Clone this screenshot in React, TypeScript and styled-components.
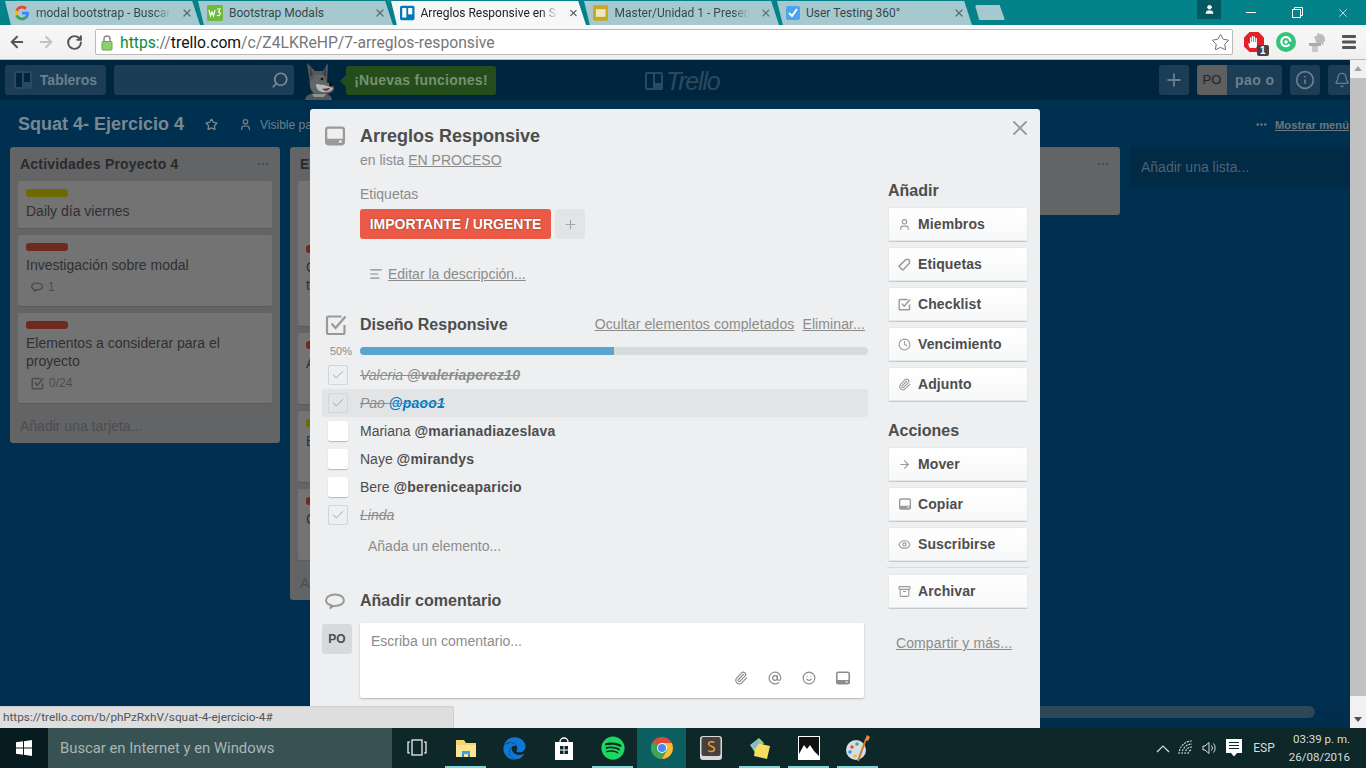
import React from 'react';
import styled, { createGlobalStyle } from 'styled-components';
import {
  AlignLeft, Archive, ArrowLeft, ArrowRight, AtSign, Bell, Check, Clock, Ellipsis, Eye, Info,
  Paperclip, Plus, RotateCw, Search, Smile, Star, User, X,
} from 'lucide-react';
import { FaEdge, FaSpotify } from 'react-icons/fa';

const Global = createGlobalStyle`
  html, body { margin: 0; padding: 0; width: 1366px; height: 768px; overflow: hidden; background: #00304f; }
  * { box-sizing: border-box; }
`;

const Screen = styled.div`
  width: 1366px; height: 768px; position: relative; overflow: hidden;
  display: flex; flex-direction: column;
  font-family: "Liberation Sans", Arial, sans-serif;
`;

/* ---------- browser ---------- */
const TabStrip = styled.div`
  height: 25px; flex: none; background: #03828a; display: flex; align-items: flex-end; padding-left: 5px; position: relative;
`;
const Tab = styled.div<{ $active?: boolean }>`
  width: 195px; height: 24px; margin-right: -2px; flex: none;
  background: ${p => (p.$active ? '#f6f7f7' : '#a6c8cf')};
  clip-path: polygon(0 0, 96% 0, 100% 100%, 3% 100%);
  display: flex; align-items: center; gap: 6px; padding: 0 7px 0 9px;
  font: 12px Roboto, sans-serif; color: ${p => (p.$active ? '#222' : '#37494d')};
`;
const TabTitle = styled.span<{ $fade?: boolean }>`
  flex: 1; white-space: nowrap;
  ${p => (p.$fade ? `
    -webkit-mask-image: linear-gradient(90deg, #000 85%, transparent 97%);
    mask-image: linear-gradient(90deg, #000 85%, transparent 97%);
  ` : '')}
`;
const NewTab = styled.div`
  width: 30px; height: 15px; margin: 0 0 5px 5px; background: #a6c8cf; border-radius: 2px;
  clip-path: polygon(0 0, 82% 0, 100% 100%, 14% 100%);
`;
const Account = styled.div`
  position: absolute; left: 1197px; top: 0; width: 24px; height: 19px; background: #04585f;
  display: flex; align-items: center; justify-content: center; color: #fff;
`;
const WinControls = styled.div`
  margin-left: auto; display: flex; align-self: flex-start; height: 25px; color: #fff;
`;
const WinButton = styled.div`
  width: 46px; height: 25px; display: flex; align-items: center; justify-content: center;
`;
const Toolbar = styled.div`
  height: 35px; flex: none; display: flex; align-items: center; padding: 0 5px 0 8px;
  background: linear-gradient(#f8f8f8, #f0f0f0); color: #555; border-bottom: 1px solid #bbb;
`;
const NavIcons = styled.div`
  display: flex; align-items: center; gap: 11px; width: 87px; flex: none;
`;
const Omnibox = styled.div`
  width: 1138px; height: 26px; flex: none; background: #fff; border: 1px solid #b9b9b9; border-radius: 2px;
  display: flex; align-items: center; padding: 0 2px 0 5px;
  font: 15.7px Roboto, sans-serif; white-space: nowrap;
`;
const UrlScheme = styled.span` color: #0a8a3c; margin-left: 7px; `;
const UrlHost = styled.span` color: #111; `;
const UrlPath = styled.span` color: #777; `;
const UrlStar = styled.span` margin-left: auto; display: flex; color: #666; `;
const Extensions = styled.div`
  display: flex; align-items: center; width: 128px; padding-left: 9px; gap: 8px; flex: none;
`;
const ExtSlot = styled.div` position: relative; display: flex; width: 24px; height: 24px; align-items: center; justify-content: center; `;
const ExtBadge = styled.span`
  position: absolute; right: -3px; bottom: -2px; width: 12px; height: 11px; background: #444; border-radius: 2px;
  color: #fff; font: bold 10px/11px "Liberation Sans", sans-serif; text-align: center;
`;

/* ---------- page ---------- */
const Page = styled.div` flex: 1; display: flex; min-height: 0; position: relative; overflow: hidden; `;
const BoardColumn = styled.div`
  width: 1350px; flex: none; display: flex; flex-direction: column; background: #00304f; overflow: hidden;
`;
const VScroll = styled.div`
  width: 16px; flex: none; background: #f1f1f1; display: flex; flex-direction: column; align-items: center;
`;
const ScrollArrow = styled.div<{ $down?: boolean }>`
  width: 0; height: 0; margin: 6px 0;
  border-left: 4px solid transparent; border-right: 4px solid transparent;
  ${p => (p.$down ? 'border-top: 5px solid #505050;' : 'border-bottom: 5px solid #a3a3a3;')}
`;
const VThumb = styled.div` width: 16px; height: 618px; background: #c1c1c1; margin-top: 1px; `;
const ScrollSpace = styled.div` flex: 1; `;

const AppHeader = styled.div`
  height: 40px; flex: none; background: #00263f; display: flex; align-items: center; padding: 0 0 0 5px; position: relative; color: #6c7f8c;
`;
const HeaderButton = styled.div<{ $w?: number }>`
  height: 30px; width: ${p => (p.$w ? `${p.$w}px` : 'auto')}; background: #1b3e56; border-radius: 3px; flex: none;
  display: flex; align-items: center; justify-content: center; gap: 8px; color: #6c7f8c;
  font: bold 14px "Liberation Sans", sans-serif;
`;
const HeaderSearch = styled(HeaderButton)`
  width: 180px; margin-left: 8px; justify-content: flex-end; padding-right: 5px; color: #7b8e9b;
  svg { transform: scaleX(-1); }
`;
const Taco = styled.div` width: 36px; height: 40px; margin-left: 7px; flex: none; display: flex; `;
const NewsBubble = styled.div`
  position: relative; height: 29px; margin-left: 9px; width: 150px; background: #254d1c; border-radius: 3px; flex: none;
  color: #76916e; font: bold 14px/29px "Liberation Sans", sans-serif; text-align: center; letter-spacing: .25px;
  &::before {
    content: ""; position: absolute; left: -6px; top: 9px; border-right: 6px solid #254d1c;
    border-top: 6px solid transparent; border-bottom: 6px solid transparent;
  }
`;
const HeaderLogo = styled.div`
  position: absolute; left: 645px; top: 9px; display: flex; align-items: center; gap: 3px; color: #2b4a60;
  font: italic 25px/24px "Liberation Sans", sans-serif; letter-spacing: -1.2px;
`;
const LogoMark = styled.span`
  width: 18px; height: 18px; border-radius: 2px; background: #2b4a60; display: flex; gap: 2px; padding: 2px;
`;
const LogoBar = styled.i<{ $h: number }>`
  display: block; width: 6px; height: ${p => p.$h}px; background: #00263f;
`;
const HeaderRight = styled.div`
  margin-left: auto; display: flex; align-items: center; gap: 8px;
`;
const UserChip = styled(HeaderButton)` gap: 0; justify-content: flex-start; overflow: hidden; width: 85px; `;
const UserInitials = styled.span`
  width: 30px; height: 30px; background: #5f5f5f; color: #242424; font: 13px/30px "Liberation Sans", sans-serif; text-align: center;
`;
const UserName = styled.span` margin-left: 8px; letter-spacing: .4px; `;
const BellButton = styled(HeaderButton)` width: 22px; justify-content: flex-start; padding-left: 6px; border-radius: 3px 0 0 3px; overflow: hidden; `;

const BoardHeader = styled.div`
  height: 47px; flex: none; display: flex; align-items: center; padding: 2px 0 0 18px; color: #79878f;
`;
const BoardTitle = styled.h1` margin: 0 21px 0 0; font: bold 18px "Liberation Sans", sans-serif; color: #7a8790; `;
const Visibility = styled.span`
  margin-left: 21px; font: 12px "Liberation Sans", sans-serif; display: flex; gap: 8px; align-items: center; color: #6f7e87; white-space: nowrap;
`;
const MenuLink = styled.span`
  margin-left: auto; display: flex; align-items: center; gap: 7px; font: bold 11.2px "Liberation Sans", sans-serif; color: #6a777f; padding-right: 1px;
`;
const Underlined = styled.u` white-space: nowrap; `;

const Lists = styled.div`
  flex: 1; min-height: 0; display: flex; align-items: flex-start; gap: 10px; padding-left: 10px;
`;
const List = styled.div<{ $h?: number }>`
  width: 270px; flex: none; background: #636466; border-radius: 3px; padding: 0 8px; color: #2d2d2d;
  ${p => (p.$h ? `height: ${p.$h}px;` : '')}
`;
const ListHead = styled.div`
  height: 34px; display: flex; align-items: center; justify-content: space-between; padding: 0 2px;
  font: bold 14px "Liberation Sans", sans-serif; color: #2a2a2a; letter-spacing: .2px;
`;
const Dots = styled.span` display: flex; margin-left: auto; color: #4a4a4c; `;
const Card = styled.div<{ $h?: number; $top?: number }>`
  background: #737374; border-radius: 2px; box-shadow: 0 1px 0 #5a5b5d; margin-bottom: 7px;
  padding: ${p => p.$top ?? 8}px 8px 8px; min-height: ${p => p.$h ?? 0}px;
  font: 14px/18px "Liberation Sans", sans-serif; color: #303030;
`;
const CardLabel = styled.div<{ $c: string }>`
  width: 42px; height: 8px; border-radius: 3px; background: ${p => p.$c}; margin-bottom: 5px;
`;
const Badges = styled.div`
  height: 24px; display: flex; align-items: center; gap: 5px; padding: 2px 0 0 5px; font-size: 12px; color: #4c4c4d;
`;
const AddCard = styled.div`
  height: 33px; padding: 0 2px; font: 14px/33px "Liberation Sans", sans-serif; color: #4c4d4f;
`;
const AddList = styled.div`
  width: 220px; height: 40px; flex: none; background: #002a45; border-radius: 3px; padding-left: 11px;
  font: 14px/40px "Liberation Sans", sans-serif; color: #4f6372;
`;
const HScroll = styled.div` height: 22px; flex: none; background: #002e4c; padding: 0 0 10px 10px; `;
const HThumb = styled.div` width: 1305px; height: 12px; background: #2e4756; border-radius: 6px; `;

const StatusBubble = styled.div`
  position: absolute; left: 0; bottom: 0; width: 454px; height: 22px; background: #dedede; border-radius: 0 3px 0 0;
  border: 1px solid #cfcfcf; border-width: 1px 1px 0 0; padding-left: 3px;
  font: 11.8px/21px Roboto, sans-serif; color: #555; z-index: 3;
`;

/* ---------- modal ---------- */
const Modal = styled.div`
  position: absolute; left: 310px; top: 49px; width: 730px; height: 619px; background: #edeff0; border-radius: 3px 3px 0 0;
  display: flex; color: #4d4d4d; font: 14px "Liberation Sans", sans-serif; z-index: 2; overflow: hidden;
`;
const CloseButton = styled.span` position: absolute; right: 8px; top: 7px; display: flex; color: #969a9c; `;
const MainColumn = styled.div` width: 558px; flex: none; padding: 0 0 0 12px; `;
const SectionRow = styled.div<{ $mt?: number }>`
  display: flex; align-items: center; margin-top: ${p => p.$mt ?? 0}px; height: 24px;
`;
const SectionIcon = styled.span` width: 38px; flex: none; display: flex; padding-left: 3px; color: #999; `;
const CardTitle = styled.h2` margin: 0; font: bold 18px "Liberation Sans", sans-serif; color: #4d4d4d; `;
const SectionTitle = styled.h3` margin: 0; font: bold 16px "Liberation Sans", sans-serif; color: #4d4d4d; `;
const Indented = styled.div` padding-left: 38px; `;
const Muted = styled.div<{ $mt?: number }>`
  color: #8c8c8c; margin-top: ${p => p.$mt ?? 0}px; line-height: 18px; white-space: nowrap;
`;
const LabelRow = styled.div` display: flex; gap: 4px; margin-top: 6px; `;
const LabelChip = styled.div`
  width: 191px; height: 30px; background: #eb5a46; border-radius: 3px; color: #fff; text-align: center;
  font: bold 14px/30px "Liberation Sans", sans-serif; text-shadow: 0 0 2px rgba(0,0,0,.45);
`;
const LabelAdd = styled.div`
  width: 30px; height: 30px; background: #e2e4e6; border-radius: 3px; color: #a4a7a9;
  display: flex; align-items: center; justify-content: center;
`;
const DescLink = styled.div`
  margin: 26px 0 0 9px; display: flex; align-items: center; gap: 5px; color: #8c8c8c; height: 18px;
`;
const ChecklistLinks = styled.div`
  margin-left: auto; display: flex; gap: 8px; color: #8c8c8c; padding: 0 3px 2px 0; letter-spacing: .1px;
`;
const Progress = styled.div` display: flex; align-items: center; height: 16px; margin-top: 6px; `;
const Percent = styled.span` width: 38px; text-align: right; padding-right: 8px; font-size: 11px; color: #8c8c8c; `;
const Track = styled.div` flex: 1; height: 8px; background: #d6dadc; border-radius: 4px; overflow: hidden; `;
const Fill = styled.div` height: 100%; background: #5ba4cf; `;
const Items = styled.div` margin-top: 2px; `;
const Item = styled.div<{ $hover?: boolean; $done?: boolean }>`
  height: 28px; display: flex; align-items: center; padding-left: 6px; border-radius: 3px;
  background: ${p => (p.$hover ? '#e2e4e6' : 'transparent')};
  color: ${p => (p.$done ? '#8c8c8c' : '#4d4d4d')};
  font-style: ${p => (p.$done ? 'italic' : 'normal')};
  text-decoration: ${p => (p.$done ? 'line-through' : 'none')};
  white-space: nowrap;
`;
const Box = styled.span<{ $done?: boolean }>`
  width: 20px; height: 20px; flex: none; margin-right: 12px; border-radius: 2px; display: flex; align-items: center; justify-content: center;
  background: ${p => (p.$done ? 'transparent' : '#fff')}; color: #9a9a9a;
  ${p => (p.$done ? 'border: 1px solid #d3d6d8;' : 'box-shadow: 0 1px 1px #b5b8ba;')}
`;
const Mention = styled.b<{ $blue?: boolean }>` ${p => (p.$blue ? 'color: #0079bf;' : '')} white-space: pre; letter-spacing: .2px; `;
const AddItem = styled.div` margin: 9px 0 0 46px; height: 18px; color: #8c8c8c; `;
const CommentRow = styled.div` display: flex; margin-top: 10px; `;
const Avatar = styled.div`
  width: 30px; height: 30px; margin: 1px 8px 0 0; background: #d6dadc; border-radius: 3px; flex: none;
  font: bold 12px/30px "Liberation Sans", sans-serif; color: #4d4d4d; text-align: center;
`;
const CommentBox = styled.div`
  width: 504px; height: 75px; background: #fff; border-radius: 2px; box-shadow: 0 1px 2px rgba(0,0,0,.25);
  padding: 10px 11px 13px; display: flex; flex-direction: column; color: #8c8c8c;
`;
const CommentTools = styled.div` margin-top: auto; display: flex; justify-content: flex-end; gap: 20px; padding-right: 3px; color: #8c8c8c; `;
const Sidebar = styled.div` width: 140px; margin-left: 20px; flex: none; padding-top: 73px; `;
const SideHead = styled.h3<{ $mt?: number }>`
  margin: ${p => p.$mt ?? 0}px 0 0; height: 18px; font: bold 16px/18px "Liberation Sans", sans-serif; color: #4d4d4d;
`;
const SideStack = styled.div` display: flex; flex-direction: column; gap: 6px; margin-top: 7px; `;
const SideButton = styled.div`
  height: 34px; background: linear-gradient(#fff, #f7f8f9); border-radius: 2px; box-shadow: 0 1px 0 #c4c9cc, 0 0 0 1px #e6e8e9 inset;
  display: flex; align-items: center; gap: 7px; padding-left: 10px; font: bold 14px "Liberation Sans", sans-serif; color: #4d4d4d; letter-spacing: .1px;
`;
const SideIcon = styled.span` width: 13px; display: flex; justify-content: center; color: #9a9a9a; flex: none; `;
const Rule = styled.div` height: 1px; background: #d6dadc; margin: 0 -1px; `;
const ShareLink = styled.div` margin: 27px 0 0 8px; color: #8c8c8c; letter-spacing: .1px; `;

/* ---------- taskbar ---------- */
const Taskbar = styled.div`
  height: 40px; flex: none; background: #0e2729; display: flex; align-items: stretch; color: #fff;
`;
const StartButton = styled.div` width: 48px; background: #071c20; display: flex; align-items: center; justify-content: center; flex: none; `;
const TaskSearch = styled.div`
  width: 344px; background: #385253; color: #a9b6b5; flex: none; padding-left: 12px; font: 14.8px/40px Roboto, sans-serif;
`;
const TaskIcons = styled.div` display: flex; `;
const TaskIcon = styled.div<{ $open?: boolean; $active?: boolean }>`
  width: 49px; display: flex; align-items: center; justify-content: center; position: relative; flex: none;
  background: ${p => (p.$active ? '#0c5f60' : 'transparent')};
  &::after {
    content: ""; position: absolute; left: 4px; right: 4px; bottom: 0; height: 2px;
    background: ${p => (p.$open ? '#7fd3d6' : 'transparent')};
  }
`;
const Tray = styled.div` margin-left: auto; display: flex; align-items: center; gap: 8px; padding-right: 16px; color: #d8dedd; `;
const TrayLang = styled.span` font: 12px Roboto, sans-serif; margin: 0 6px 0 3px; `;
const Clocky = styled.div` font: 11.5px/18px Roboto, sans-serif; text-align: right; `;

/* ---------- drawings ---------- */
const CardGlyph = ({ size = 20, color = '#999' }: { size?: number; color?: string }) => (
  <svg width={size} height={size} viewBox="0 0 18 18" fill="none">
    <rect x="1" y="1.500" width="16" height="15" rx="2" stroke={color} strokeWidth="2" />
    <path d="M1 11.500h16v4a1 1 0 0 1-1 1H2a1 1 0 0 1-1-1z" fill={color} />
    <rect x="12.500" y="13" width="2.500" height="2" fill="#edeff0" />
  </svg>
);
const ChecklistGlyph = ({ size = 22, weight = 2.200 }: { size?: number; weight?: number }) => (
  <svg width={size} height={size} viewBox="0 0 22 22" fill="none" stroke="currentColor" strokeWidth={weight}>
    <path d="M19.500 11v7.500a1.500 1.500 0 0 1-1.500 1.500H3.500A1.500 1.500 0 0 1 2 18.500V4a1.500 1.500 0 0 1 1.500-1.500h13" />
    <path d="M6.500 9.500l4 4.500L20.500 2.500" />
  </svg>
);
const BubbleGlyph = ({ width = 20, height = 16, weight = 2 }: { width?: number; height?: number; weight?: number }) => (
  <svg width={width} height={height} viewBox="0 0 20 16" fill="none" stroke="currentColor" strokeWidth={weight}>
    <path d="M6 12.300C3 11.500 1 9.700 1 7.300 1 4 5 1.500 10 1.500s9 2.500 9 5.800-4 5.700-9 5.700c-.7 0-1.400 0-2-.1L5.500 15z" />
  </svg>
);
const TagGlyph = () => (
  <svg width="13" height="13" viewBox="0 0 13 13" fill="none" stroke="currentColor" strokeWidth="1.500">
    <path d="M8 1.500h2.500a1 1 0 0 1 1 1V5l-6 6.500a1 1 0 0 1-1.400 0L1.500 9a1 1 0 0 1 0-1.400z" />
  </svg>
);
const GoogleG = () => (
  <svg width="16" height="16" viewBox="0 0 48 48">
    <path fill="#4285F4" d="M45 24.500c0-1.600-.1-3.100-.4-4.500H24v8.500h11.800c-.5 2.800-2 5.100-4.400 6.700v5.500h7.100C42.700 36.800 45 31.200 45 24.500z" />
    <path fill="#34A853" d="M24 46c5.900 0 10.900-2 14.500-5.300l-7.100-5.500c-2 1.300-4.500 2.100-7.400 2.100-5.700 0-10.500-3.800-12.200-9H4.500v5.700C8.100 41.100 15.500 46 24 46z" />
    <path fill="#FBBC05" d="M11.800 28.300c-.4-1.300-.7-2.800-.7-4.300s.3-3 .7-4.300V14H4.500C3 17 2 20.400 2 24s1 7 2.500 10z" />
    <path fill="#EA4335" d="M24 10.700c3.200 0 6.100 1.100 8.400 3.300l6.300-6.300C34.900 4.200 29.900 2 24 2 15.500 2 8.100 6.900 4.500 14l7.300 5.700c1.700-5.200 6.500-9 12.200-9z" />
  </svg>
);
const W3Icon = () => (
  <svg width="16" height="16" viewBox="0 0 16 16">
    <rect width="16" height="16" rx="2" fill="#6cbb3f" />
    <path d="M2 5l1.500 6 1.500-4 1.500 4L8 5" stroke="#fff" strokeWidth="1.200" fill="none" />
    <path d="M10 4h3l-1.500 3c1.500 0 2 1 1.700 2.200S11 11.500 10 10" stroke="#fff" strokeWidth="1.100" fill="none" />
  </svg>
);
const TrelloIcon = () => (
  <svg width="16" height="16" viewBox="0 0 16 16">
    <rect width="16" height="16" rx="2" fill="#0079bf" />
    <rect x="2.500" y="2.500" width="4.500" height="10.500" fill="#fff" />
    <rect x="9" y="2.500" width="4.500" height="7" fill="#fff" />
  </svg>
);
const SlidesIcon = () => (
  <svg width="16" height="16" viewBox="0 0 16 16">
    <rect width="16" height="16" rx="2" fill="#c9a81e" />
    <rect x="3" y="4" width="10" height="8" fill="#e9e6c2" />
  </svg>
);
const CheckFav = () => (
  <svg width="14" height="14" viewBox="0 0 14 14">
    <rect width="14" height="14" rx="2" fill="#4ea4ea" />
    <path d="M3 7l3 3 5-7" stroke="#fff" strokeWidth="2" fill="none" />
  </svg>
);
const LockIcon = () => (
  <svg width="12" height="17" viewBox="0 0 12 17">
    <path d="M3 8V5a3 3 0 0 1 6 0v3" stroke="#8a8a8a" strokeWidth="1.500" fill="none" />
    <rect x="1" y="7.500" width="10" height="8.500" rx="1" fill="#8ed070" stroke="#63a84a" />
  </svg>
);
const AdblockIcon = () => (
  <svg width="22" height="22" viewBox="0 0 22 22">
    <path d="M6.500 1h9L21 6.500v9L15.500 21h-9L1 15.500v-9z" fill="#e3212b" />
    <path d="M7 17c-2-3-2-5-1-5l1 1V6.500h1.200V11h.6V5h1.300v6h.6V5.500H12V11h.6V7h1.300v8c0 1.500-1 2-2 2z" fill="#fff" />
  </svg>
);
const GrammarlyIcon = () => (
  <svg width="20" height="20" viewBox="0 0 20 20">
    <circle cx="10" cy="10" r="10" fill="#35c27b" />
    <path d="M13.500 12.500A4.600 4.600 0 1 1 14.500 9.500" stroke="#fff" strokeWidth="2.200" fill="none" />
    <circle cx="10" cy="10" r="1.700" fill="#fff" />
  </svg>
);
const AvastIcon = () => (
  <svg width="22" height="22" viewBox="0 0 22 22" fill="#bcbcbc">
    <circle cx="14" cy="8" r="5" />
    <path d="M12 2l5 12M8 6l11 4" stroke="#bcbcbc" strokeWidth="1.500" />
    <rect x="3" y="12" width="12" height="3" fill="#aaa" />
    <rect x="6" y="15" width="6" height="6" fill="#c8c8c8" />
  </svg>
);
const Hamburger = () => (
  <svg width="16" height="16" viewBox="0 0 16 16" fill="#555">
    <rect x="1" y="1" width="14" height="3" rx="1" />
    <rect x="1" y="6.500" width="14" height="3" rx="1" />
    <rect x="1" y="12" width="14" height="3" rx="1" />
  </svg>
);
const TacoArt = () => (
  <svg width="36" height="40" viewBox="0 0 36 40">
    <path d="M9 24L6 3l8 8h8l5-8-1 21z" fill="#565a5d" />
    <path d="M9 6l3 8-3 3zM25 6l-3 8 3 3z" fill="#3c3f41" />
    <path d="M9 22c-1 6 2 12 7 12h6c6 0 11-2 11-6s-6-5-8-6l-2-7h-8z" fill="#636668" />
    <path d="M15 24c0 6 4 8 8 8s8-1 9-4l-9-3z" fill="#b9b9b9" />
    <circle cx="30" cy="24.500" r="2" fill="#111" />
    <circle cx="21" cy="19" r="1.300" fill="#111" />
    <path d="M21 29c3 3 7 2 8-1z" fill="#6a2a2a" />
    <path d="M4 40c0-4 5-7 11-7h6c5 0 10 3 10 7z" fill="#53575a" />
    <path d="M11 34h14l-2 3h-10z" fill="#8f9496" />
  </svg>
);
const WinLogo = () => (
  <svg width="16" height="16" viewBox="0 0 16 16" fill="#fff">
    <path d="M0 2.300l7-1v6.300H0zM8 1.200L16 0v7.600H8zM0 8.500h7v6.300l-7-1zM8 8.500h8V16l-8-1.200z" />
  </svg>
);
const TaskView = () => (
  <svg width="20" height="18" viewBox="0 0 20 18" fill="none" stroke="#fff" strokeWidth="1.200">
    <rect x="5" y="1" width="10" height="15" />
    <path d="M3 3H1v11h2M17 3h2v11h-2" />
  </svg>
);
const FolderIcon = () => (
  <svg width="22" height="22" viewBox="0 0 22 22">
    <path d="M1 3h8l2 3h10v14H1z" fill="#f5d46c" />
    <rect x="1" y="8" width="20" height="12" fill="#fbe58f" />
    <path d="M7 20v-5h8v5h-2v-3H9v3z" fill="#2e8fd8" />
    <rect x="7" y="14" width="8" height="3" fill="#39a4ea" />
  </svg>
);
const StoreIcon = () => (
  <svg width="20" height="24" viewBox="0 0 20 24">
    <path d="M6 6a4 4 0 0 1 8 0" stroke="#fff" strokeWidth="1.400" fill="none" />
    <path d="M1 6h18v18H1z" fill="#fff" />
    <path d="M6 10h3.500v3.500H6zM10.500 10H14v3.500h-3.500zM6 14.500h3.500V18H6zM10.500 14.500H14V18h-3.500z" fill="#0e2729" />
  </svg>
);
const ChromeIcon = () => (
  <svg width="22" height="22" viewBox="0 0 22 22">
    <circle cx="11" cy="11" r="11" fill="#dd4b39" />
    <path d="M11 11L1.500 16.500A11 11 0 0 1 2 5z" fill="#3aa757" />
    <path d="M11 11l-9.500 5.500A11 11 0 0 0 11 22l5.500-9.500z" fill="#3aa757" />
    <path d="M11 6h9.700A11 11 0 0 1 11 22l5.500-9.500z" fill="#f3c033" />
    <circle cx="11" cy="11" r="5" fill="#fff" />
    <circle cx="11" cy="11" r="4" fill="#4a88ee" />
  </svg>
);
const SublimeIcon = () => (
  <svg width="24" height="26" viewBox="0 0 24 26">
    <rect x="1" y="1" width="22" height="24" rx="3" fill="#d9d9d9" />
    <rect x="2.500" y="2" width="19" height="19" rx="2" fill="#45413c" />
    <path d="M15.500 7.500c-2-1.500-6-1-6 1.500s6 2 6 5-4.500 3-6.500 1.500" stroke="#f09a3e" strokeWidth="1.500" fill="none" />
  </svg>
);
const StickyIcon = () => (
  <svg width="26" height="26" viewBox="0 0 26 26">
    <path d="M3 10l9-7 5 5-8 11z" fill="#8fd08a" />
    <path d="M9 8l14 3-3 13-13-3z" fill="#f7dc5f" />
    <path d="M5 9l6-4 1 3-4 6z" fill="#7fb7e0" />
  </svg>
);
const PhotoIcon = () => (
  <svg width="22" height="24" viewBox="0 0 22 24">
    <rect width="22" height="24" fill="#fff" />
    <rect x="1" y="1" width="20" height="22" fill="#111" />
    <path d="M1 23V18l5-9 3 4 3-4 4 6 5 5v3z" fill="#fff" />
  </svg>
);
const PaintIcon = () => (
  <svg width="26" height="28" viewBox="0 0 26 28">
    <ellipse cx="11" cy="16" rx="10" ry="10" fill="#d4dee6" />
    <circle cx="7" cy="13" r="1.800" fill="#e74c3c" />
    <circle cx="12" cy="10" r="1.800" fill="#4caf50" />
    <circle cx="5" cy="18" r="1.800" fill="#3498db" />
    <circle cx="10" cy="22" r="1.800" fill="#f1c40f" />
    <path d="M13 27L21 5" stroke="#c77a2c" strokeWidth="2" />
    <path d="M20 6l2-5 3 2-2 4z" fill="#e6893a" />
  </svg>
);
const WifiIcon = () => (
  <svg width="16" height="16" viewBox="0 0 16 16" fill="none" stroke="#d8dedd" strokeWidth="1.100">
    <path d="M1 14a13 13 0 0 1 13-13M4 14a10 10 0 0 1 10-10M7 14a7 7 0 0 1 7-7M10 14a4 4 0 0 1 4-4" strokeDasharray="2 1" />
  </svg>
);
const VolumeIcon = () => (
  <svg width="16" height="16" viewBox="0 0 16 16" fill="none" stroke="#d8dedd" strokeWidth="1">
    <path d="M1 6v4h2l4 3.500v-11L3 6z" />
    <path d="M9.500 5.500a4 4 0 0 1 0 5M11.500 3.500a7 7 0 0 1 0 9" />
  </svg>
);
const NoteIcon = () => (
  <svg width="16" height="18" viewBox="0 0 16 18">
    <path d="M0 0h16v14h-5l-3 3.500L5 14H0z" fill="#fff" />
    <path d="M3 3.500h10M3 6.500h10M3 9.500h10" stroke="#0e2729" />
  </svg>
);
const CaretUp = () => (
  <svg width="14" height="9" viewBox="0 0 14 9" fill="none" stroke="#d8dedd" strokeWidth="1.200"><path d="M1 8l6-6 6 6" /></svg>
);

const Labelled = ({ icon, text }: { icon: React.ReactNode; text: string }) => (
  <SideButton><SideIcon>{icon}</SideIcon>{text}</SideButton>
);

const done = <Check size={14} strokeWidth={1.500} />;
const tabClose = <X size={12} strokeWidth={2.500} color="#5b6d70" />;

export default function App() {
  return (
    <Screen>
      <Global />
      <TabStrip>
        <Tab><GoogleG /><TabTitle $fade>modal bootstrap - Buscar</TabTitle>{tabClose}</Tab>
        <Tab><W3Icon /><TabTitle>Bootstrap Modals</TabTitle>{tabClose}</Tab>
        <Tab $active><TrelloIcon /><TabTitle $fade>Arreglos Responsive en Sc</TabTitle><X size={12} strokeWidth={2.500} color="#555" /></Tab>
        <Tab><SlidesIcon /><TabTitle $fade>Master/Unidad 1 - Present</TabTitle>{tabClose}</Tab>
        <Tab><CheckFav /><TabTitle>User Testing 360°</TabTitle>{tabClose}</Tab>
        <NewTab />
        <Account><User size={11} fill="#fff" /></Account>
        <WinControls>
          <WinButton><svg width="11" height="11" viewBox="0 0 11 11" stroke="#fff"><path d="M0 5.500h10" /></svg></WinButton>
          <WinButton><svg width="11" height="11" viewBox="0 0 11 11" stroke="#fff" fill="none"><rect x=".5" y="2.500" width="8" height="8" /><path d="M2.500 2.500v-2h8v8h-2" /></svg></WinButton>
          <WinButton><X size={14} strokeWidth={1.200} /></WinButton>
        </WinControls>
      </TabStrip>
      <Toolbar>
        <NavIcons>
          <ArrowLeft size={18} strokeWidth={2.600} color="#555" />
          <ArrowRight size={18} strokeWidth={2.600} color="#c2c2c2" />
          <RotateCw size={17} strokeWidth={2.800} color="#555" />
        </NavIcons>
        <Omnibox>
          <LockIcon />
          <UrlScheme>https</UrlScheme><UrlPath>://</UrlPath><UrlHost>trello.com</UrlHost><UrlPath>/c/Z4LKReHP/7-arreglos-responsive</UrlPath>
          <UrlStar><Star size={19} strokeWidth={1.200} /></UrlStar>
        </Omnibox>
        <Extensions>
          <ExtSlot><AdblockIcon /><ExtBadge>1</ExtBadge></ExtSlot>
          <ExtSlot><GrammarlyIcon /></ExtSlot>
          <ExtSlot><AvastIcon /></ExtSlot>
          <ExtSlot><Hamburger /></ExtSlot>
        </Extensions>
      </Toolbar>
      <Page>
        <BoardColumn>
          <AppHeader>
            <HeaderButton $w={101}>
              <LogoMark><LogoBar $h={14} /><LogoBar $h={9} /></LogoMark>
              Tableros
            </HeaderButton>
            <HeaderSearch><Search size={18} strokeWidth={2.200} /></HeaderSearch>
            <Taco><TacoArt /></Taco>
            <NewsBubble>¡Nuevas funciones!</NewsBubble>
            <HeaderLogo><LogoMark><LogoBar $h={14} /><LogoBar $h={9} /></LogoMark>Trello</HeaderLogo>
            <HeaderRight>
              <HeaderButton $w={30}><Plus size={20} strokeWidth={2.200} /></HeaderButton>
              <UserChip><UserInitials>PO</UserInitials><UserName>pao o</UserName></UserChip>
              <HeaderButton $w={30}><Info size={20} /></HeaderButton>
              <BellButton><Bell size={20} /></BellButton>
            </HeaderRight>
          </AppHeader>
          <BoardHeader>
            <BoardTitle>Squat 4- Ejercicio 4</BoardTitle>
            <Star size={13} strokeWidth={2.500} />
            <Visibility><User size={13} strokeWidth={2.500} />Visible pa</Visibility>
            <MenuLink><Ellipsis size={13} strokeWidth={3} /><Underlined>Mostrar menú</Underlined></MenuLink>
          </BoardHeader>
          <Lists>
            <List>
              <ListHead>Actividades Proyecto 4<Dots><Ellipsis size={14} /></Dots></ListHead>
              <Card><CardLabel $c="#6f6a00" />Daily día viernes</Card>
              <Card>
                <CardLabel $c="#6e2a20" />Investigación sobre modal
                <Badges><BubbleGlyph width={12} height={10} weight={2.400} />1</Badges>
              </Card>
              <Card $h={90}>
                <CardLabel $c="#6e2a20" />Elementos a considerar para el proyecto
                <Badges><ChecklistGlyph size={13} weight={2.600} />0/24</Badges>
              </Card>
              <AddCard>Añadir una tarjeta...</AddCard>
            </List>
            <List>
              <ListHead>EN PROCESO</ListHead>
              <Card $h={145} $top={64}><CardLabel $c="#6e2a20" />C<br />t</Card>
              <Card $h={71}><CardLabel $c="#6e2a20" />A</Card>
              <Card $h={71}><CardLabel $c="#6f6a00" />B</Card>
              <Card $h={71}><CardLabel $c="#6e2a20" />C</Card>
              <AddCard>Añadir una tarjeta...</AddCard>
            </List>
            <List />
            <List $h={68}>
              <ListHead><Dots><Ellipsis size={14} /></Dots></ListHead>
            </List>
            <AddList>Añadir una lista...</AddList>
          </Lists>
          <HScroll><HThumb /></HScroll>
        </BoardColumn>
        <VScroll>
          <ScrollArrow />
          <VThumb />
          <ScrollSpace />
          <ScrollArrow $down />
        </VScroll>
        <Modal>
          <CloseButton><X size={24} strokeWidth={1.800} /></CloseButton>
          <MainColumn>
            <SectionRow $mt={15}>
              <SectionIcon><CardGlyph /></SectionIcon>
              <CardTitle>Arreglos Responsive</CardTitle>
            </SectionRow>
            <Indented>
              <Muted $mt={3}>en lista <u>EN PROCESO</u></Muted>
              <Muted $mt={16}>Etiquetas</Muted>
              <LabelRow>
                <LabelChip>IMPORTANTE / URGENTE</LabelChip>
                <LabelAdd><Plus size={15} strokeWidth={1.800} /></LabelAdd>
              </LabelRow>
              <DescLink><AlignLeft size={14} strokeWidth={2} /><u>Editar la descripción...</u></DescLink>
            </Indented>
            <SectionRow $mt={30}>
              <SectionIcon><ChecklistGlyph /></SectionIcon>
              <SectionTitle>Diseño Responsive</SectionTitle>
              <ChecklistLinks><u>Ocultar elementos completados</u><u>Eliminar...</u></ChecklistLinks>
            </SectionRow>
            <Progress>
              <Percent>50%</Percent>
              <Track><Fill style={{ width: '50%' }} /></Track>
            </Progress>
            <Items>
              <Item $done><Box $done>{done}</Box>Valeria&nbsp;<Mention>@valeriaperez10</Mention></Item>
              <Item $done $hover><Box $done>{done}</Box>Pao&nbsp;<Mention $blue>@paoo1</Mention></Item>
              <Item><Box />Mariana&nbsp;<Mention>@marianadiazeslava</Mention></Item>
              <Item><Box />Naye&nbsp;<Mention>@mirandys</Mention></Item>
              <Item><Box />Bere&nbsp;<Mention>@bereniceaparicio</Mention></Item>
              <Item $done><Box $done>{done}</Box>Linda</Item>
            </Items>
            <AddItem>Añada un elemento...</AddItem>
            <SectionRow $mt={33}>
              <SectionIcon><BubbleGlyph /></SectionIcon>
              <SectionTitle>Añadir comentario</SectionTitle>
            </SectionRow>
            <CommentRow>
              <Avatar>PO</Avatar>
              <CommentBox>
                Escriba un comentario...
                <CommentTools>
                  <Paperclip size={14} />
                  <AtSign size={14} />
                  <Smile size={14} />
                  <CardGlyph size={14} color="#8c8c8c" />
                </CommentTools>
              </CommentBox>
            </CommentRow>
          </MainColumn>
          <Sidebar>
            <SideHead>Añadir</SideHead>
            <SideStack>
              <Labelled icon={<User size={13} />} text="Miembros" />
              <Labelled icon={<TagGlyph />} text="Etiquetas" />
              <Labelled icon={<ChecklistGlyph size={13} weight={2.400} />} text="Checklist" />
              <Labelled icon={<Clock size={13} />} text="Vencimiento" />
              <Labelled icon={<Paperclip size={13} />} text="Adjunto" />
            </SideStack>
            <SideHead $mt={21}>Acciones</SideHead>
            <SideStack>
              <Labelled icon={<ArrowRight size={13} />} text="Mover" />
              <Labelled icon={<CardGlyph size={12} color="#9a9a9a" />} text="Copiar" />
              <Labelled icon={<Eye size={13} />} text="Suscribirse" />
              <Rule />
              <Labelled icon={<Archive size={13} />} text="Archivar" />
            </SideStack>
            <ShareLink><u>Compartir y más...</u></ShareLink>
          </Sidebar>
        </Modal>
        <StatusBubble>https://trello.com/b/phPzRxhV/squat-4-ejercicio-4#</StatusBubble>
      </Page>
      <Taskbar>
        <StartButton><WinLogo /></StartButton>
        <TaskSearch>Buscar en Internet y en Windows</TaskSearch>
        <TaskIcons>
          <TaskIcon><TaskView /></TaskIcon>
          <TaskIcon $open><FolderIcon /></TaskIcon>
          <TaskIcon><FaEdge size={23} color="#0f78d4" /></TaskIcon>
          <TaskIcon><StoreIcon /></TaskIcon>
          <TaskIcon $open><FaSpotify size={24} color="#1ed760" /></TaskIcon>
          <TaskIcon $active><ChromeIcon /></TaskIcon>
          <TaskIcon><SublimeIcon /></TaskIcon>
          <TaskIcon $open><StickyIcon /></TaskIcon>
          <TaskIcon $open><PhotoIcon /></TaskIcon>
          <TaskIcon $open><PaintIcon /></TaskIcon>
        </TaskIcons>
        <Tray>
          <CaretUp />
          <WifiIcon />
          <VolumeIcon />
          <NoteIcon />
          <TrayLang>ESP</TrayLang>
          <Clocky>03:39 p. m.<br />26/08/2016</Clocky>
        </Tray>
      </Taskbar>
    </Screen>
  );
}
